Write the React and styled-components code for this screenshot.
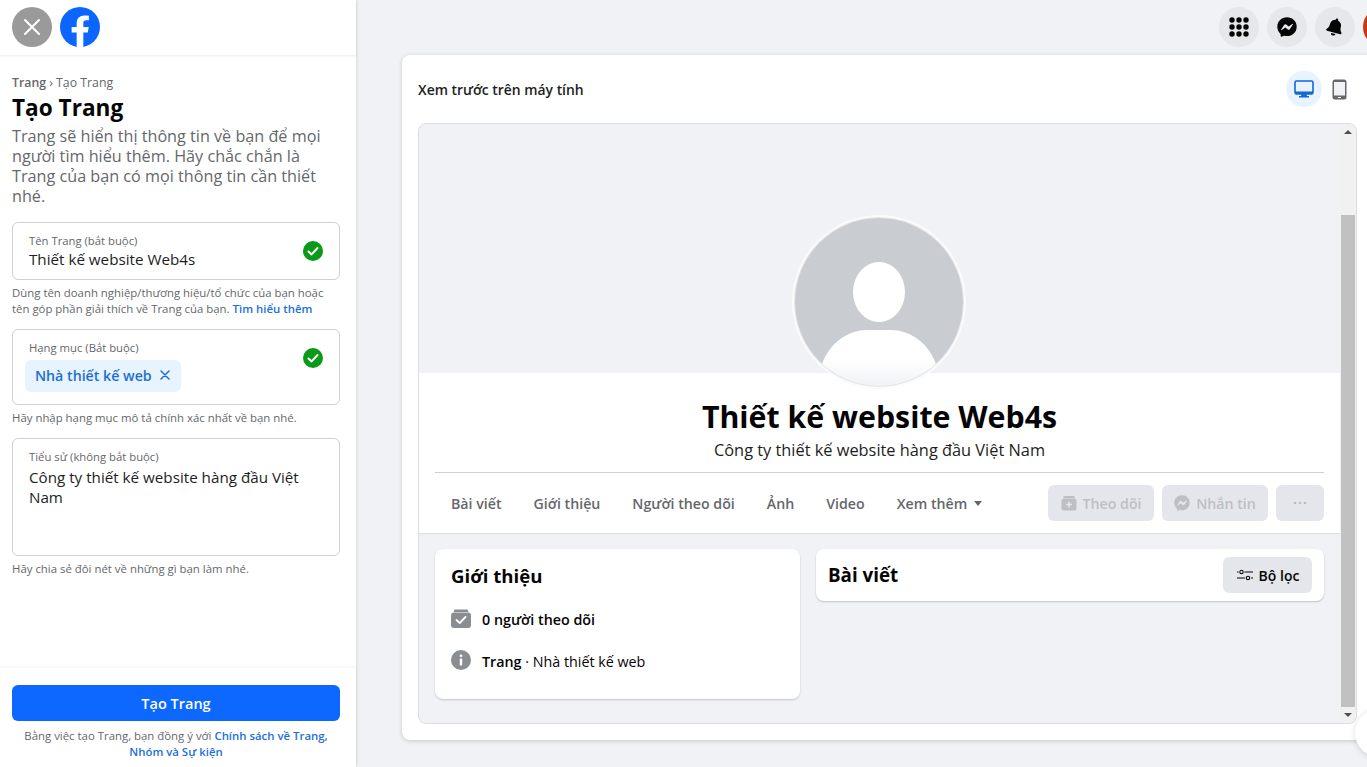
import React from "react";
import styled, { createGlobalStyle } from "styled-components";
import { FaFacebookMessenger, FaBell } from "react-icons/fa";

const FONT = `"Open Sans", "Noto Sans", "Liberation Sans", sans-serif`;

const GlobalStyle = createGlobalStyle`
  html, body {
    margin: 0;
    height: 100%;
    overflow: hidden;
    background: #f0f2f5;
    font-family: ${FONT};
    color: #050505;
  }
  * { box-sizing: border-box; }
`;

const Page = styled.div`
  display: flex;
  width: 100vw;
  height: 100vh;
  position: relative;
  overflow: hidden;
`;

/* ---------- sidebar ---------- */

const Sidebar = styled.aside`
  width: 356px;
  flex-shrink: 0;
  height: 100%;
  display: flex;
  flex-direction: column;
  background: #fff;
  box-shadow: 1px 0 3px rgba(0, 0, 0, 0.1);
  z-index: 2;
`;

const SideHeader = styled.div`
  height: 55px;
  flex-shrink: 0;
  display: flex;
  align-items: flex-start;
  gap: 8px;
  padding: 7px 12px 0;
  box-shadow: 0 1px 2px rgba(0, 0, 0, 0.08);
`;

const CloseButton = styled.button`
  width: 40px;
  height: 40px;
  border: 0;
  padding: 0;
  border-radius: 50%;
  background: #9a9a9a;
  display: flex;
  align-items: center;
  justify-content: center;
`;

const SideBody = styled.div`
  flex: 1;
  padding: 20px 16px 0 12px;
  min-height: 0;
`;

const Crumbs = styled.div`
  font-size: 12.3px;
  line-height: 16px;
  color: #65676b;
  b { font-weight: 600; }
`;

const PageTitle = styled.h1`
  margin: 2px 0 0;
  font-size: 22.6px;
  line-height: 30px;
  font-weight: 700;
  color: #050505;
`;

const Lead = styled.p`
  margin: 3px 0 16px;
  font-size: 16.2px;
  line-height: 20px;
  color: #65676b;
`;

const Field = styled.div`
  position: relative;
  width: 328px;
  height: ${(p) => p.$h}px;
  border: 1px solid #ced0d4;
  border-radius: 6px;
  padding: 11px 16px 0;
  background: #fff;
`;

const FieldLabel = styled.div`
  font-size: 11.3px;
  line-height: 14px;
  color: #65676b;
`;

const FieldValue = styled.div`
  margin-top: ${(p) => p.$top}px;
  font-size: 15.2px;
  line-height: 20px;
  color: #1c1e21;
  width: 285px;
`;

const CheckBadge = styled.span`
  position: absolute;
  right: 16px;
  top: 18px;
  width: 20px;
  height: 20px;
  border-radius: 50%;
  background: #0a9a17;
  display: flex;
  align-items: center;
  justify-content: center;
`;

const Chip = styled.span`
  display: inline-flex;
  align-items: center;
  gap: 8px;
  width: 156px;
  height: 32px;
  margin: 5px 0 0 -4px;
  padding: 0 9px 2px 10px;
  border-radius: 6px;
  background: #e7f3ff;
  color: #1b6fd0;
  font-size: 14.2px;
  font-weight: 600;
  white-space: nowrap;
`;

const Hint = styled.p`
  margin: 5px 0 ${(p) => p.$gap}px;
  font-size: 11.4px;
  line-height: 16px;
  color: #65676b;
  width: 328px;
  a { color: #216fdb; font-weight: 600; text-decoration: none; }
`;

const SideFooter = styled.div`
  flex-shrink: 0;
  height: 99px;
  padding: 17px 16px 0 12px;
  box-shadow: 0 -1px 3px rgba(0, 0, 0, 0.05);
`;

const SubmitButton = styled.button`
  display: block;
  width: 328px;
  height: 36px;
  border: 0;
  border-radius: 6px;
  background: #0c68ff;
  color: #fff;
  font-family: ${FONT};
  font-size: 14.5px;
  font-weight: 600;
`;

const Terms = styled.p`
  margin: 7px 0 0;
  width: 328px;
  text-align: center;
  font-size: 11.4px;
  line-height: 16px;
  color: #65676b;
  a { color: #216fdb; font-weight: 600; text-decoration: none; }
`;

/* ---------- main ---------- */

const Main = styled.main`
  flex: 1;
  min-width: 0;
  display: flex;
  flex-direction: column;
  padding-left: 46px;
`;

const TopBar = styled.div`
  height: 55px;
  flex-shrink: 0;
  display: flex;
  justify-content: flex-end;
  align-items: flex-start;
  gap: 8px;
  padding-top: 7px;
  margin-right: -36px;
`;

const RoundButton = styled.div`
  width: 40px;
  height: 40px;
  flex-shrink: 0;
  border-radius: 50%;
  background: ${(p) => p.$bg || "#e6e7ea"};
  display: flex;
  align-items: center;
  justify-content: center;
  color: #050505;
`;

const TiltedBell = styled(FaBell)`
  transform: rotate(15deg);
`;

const PreviewCard = styled.section`
  height: 685px;
  margin-right: -12px;
  background: #fff;
  border-radius: 8px;
  box-shadow: 0 1px 4px rgba(0, 0, 0, 0.18);
  padding: 16px 22px 16px 16px;
  display: flex;
  flex-direction: column;
`;

const PreviewHead = styled.div`
  height: 36px;
  flex-shrink: 0;
  display: flex;
  align-items: center;
  justify-content: space-between;
  margin-bottom: 16px;
`;

const PreviewLabel = styled.div`
  font-size: 13.9px;
  font-weight: 600;
  color: #1c1e21;
`;

const DeviceGroup = styled.div`
  display: flex;
  align-items: center;
  gap: 0;
`;

const DeviceButton = styled.div`
  width: ${(p) => (p.$active ? 36 : 35)}px;
  height: 36px;
  border-radius: 50%;
  background: ${(p) => (p.$active ? "#e7f3ff" : "transparent")};
  display: flex;
  align-items: center;
  justify-content: center;
`;

const Frame = styled.div`
  flex: 1;
  min-height: 0;
  display: flex;
  background: #f0f2f5;
  border: 1px solid #dadde1;
  border-radius: 8px;
  overflow: hidden;
`;

const FrameContent = styled.div`
  flex: 1;
  min-width: 0;
`;

const Cover = styled.div`
  height: 249px;
  background: #f0f2f5;
`;

const ProfileHead = styled.div`
  position: relative;
  height: 160px;
  background: #fff;
  box-shadow: 0 1px 1px rgba(0, 0, 0, 0.08);
  padding: 24px 16px 0;
  text-align: center;
`;

const Avatar = styled.div`
  position: absolute;
  left: 50%;
  top: -155px;
  width: 168px;
  height: 168px;
  margin-left: -85px;
  border-radius: 50%;
  overflow: hidden;
  box-shadow: 0 0 0 1px rgba(0, 0, 0, 0.08);
  svg { display: block; }
`;

const AvatarRing = styled.div`
  position: absolute;
  left: 50%;
  top: -158px;
  width: 174px;
  height: 174px;
  margin-left: -88px;
  border-radius: 50%;
  background: #fbfbfc;
`;

const ProfileName = styled.h2`
  position: relative;
  margin: 0;
  font-size: 30.3px;
  line-height: 40px;
  font-weight: 700;
  color: #050505;
`;

const ProfileBio = styled.div`
  font-size: 16.35px;
  line-height: 20px;
  margin-top: 3px;
  color: #1c1e21;
`;

const TabRow = styled.div`
  margin-top: 12px;
  height: 61px;
  border-top: 1px solid #ced0d4;
  display: flex;
  align-items: center;
  justify-content: space-between;
`;

const Tabs = styled.div`
  display: flex;
  gap: 32px;
  padding-left: 16px;
`;

const Tab = styled.div`
  display: flex;
  align-items: center;
  gap: 7px;
  font-size: 14.2px;
  font-weight: 600;
  color: #65676b;
`;

const Caret = styled.span`
  width: 0;
  height: 0;
  border-left: 4.5px solid transparent;
  border-right: 4.5px solid transparent;
  border-top: 5px solid #65676b;
`;

const Actions = styled.div`
  display: flex;
  gap: 8px;
`;

const GhostButton = styled.div`
  width: ${(p) => p.$w}px;
  height: 36px;
  border-radius: 6px;
  background: #e4e6eb;
  color: #bcc0c4;
  font-size: 14.2px;
  font-weight: 600;
  display: flex;
  align-items: center;
  justify-content: center;
  gap: 6px;
`;

const Columns = styled.div`
  display: grid;
  grid-template-columns: 365px 508px;
  gap: 16px;
  padding: 16px 16px 0;
  align-items: start;
`;

const Card = styled.div`
  background: #fff;
  border-radius: 8px;
  box-shadow: 0 1px 2px rgba(0, 0, 0, 0.2);
`;

const AboutCard = styled(Card)`
  height: 150px;
  padding: 14px 16px 0;
`;

const CardTitle = styled.h3`
  margin: 0 0 19px;
  font-size: 18.6px;
  line-height: 26px;
  font-weight: 700;
  color: #050505;
`;

const InfoRow = styled.div`
  display: flex;
  align-items: center;
  gap: 11px;
  height: 20px;
  margin-bottom: 22px;
  font-size: 14.3px;
  color: #050505;
  b { font-weight: 600; }
`;

const InfoText = styled.span`
  padding-top: 2px;
`;

const PostsCard = styled(Card)`
  height: 52px;
  display: flex;
  align-items: center;
  justify-content: space-between;
  padding: 0 12px;
`;

const PostsTitle = styled.div`
  font-size: 18.8px;
  font-weight: 700;
`;

const FilterButton = styled.div`
  width: 89px;
  height: 36px;
  border-radius: 6px;
  background: #e4e6eb;
  display: flex;
  align-items: center;
  justify-content: center;
  gap: 5px;
  font-size: 14px;
  font-weight: 600;
  color: #050505;
`;

const Scrollbar = styled.div`
  width: 16px;
  flex-shrink: 0;
  display: flex;
  flex-direction: column;
  align-items: center;
  background: #f1f1f1;
`;

const ScrollArrow = styled.div`
  height: 16px;
  flex-shrink: 0;
  display: flex;
  align-items: center;
  justify-content: center;
  margin-top: ${(p) => (p.$down ? "auto" : "0")};
  &::before {
    content: "";
    border-left: 4px solid transparent;
    border-right: 4px solid transparent;
    ${(p) => (p.$down ? "border-top: 4px solid #505050;" : "border-bottom: 4px solid #505050;")}
  }
`;

const ScrollThumb = styled.div`
  width: 14px;
  height: 492px;
  margin-top: 75px;
  background: #c1c1c1;
`;

const ChatBubble = styled.div`
  position: absolute;
  left: 1355px;
  top: 709px;
  width: 48px;
  height: 48px;
  border-radius: 50%;
  background: #fff;
  box-shadow: 0 1px 6px rgba(0, 0, 0, 0.15);
  z-index: 3;
`;

/* ---------- drawings ---------- */

const FbLogo = () => (
  <svg width="40" height="40" viewBox="0 0 36 36">
    <circle cx="18" cy="18" r="18" fill="#0b66ff" />
    <path
      d="M25 23l.8-5H21v-3.500c0-1.400.5-2.500 2.700-2.500H26V7.900c-1.300-.2-2.700-.3-4-.3-4.100 0-7 2.500-7 7V18h-4.500v5H15v12.700c1 .2 2 .3 3 .3s2-.1 3-.3V23h4z"
      fill="#fff"
    />
  </svg>
);

const CloseIcon = () => (
  <svg width="18" height="18" viewBox="0 0 18 18">
    <path d="M2 2 16 16M16 2 2 16" stroke="#fff" strokeWidth="2" strokeLinecap="round" />
  </svg>
);

const CheckIcon = () => (
  <svg width="12" height="12" viewBox="0 0 12 12">
    <path d="M1.500 6.500 4.600 9.400 10.500 3" fill="none" stroke="#fff" strokeWidth="2" strokeLinecap="round" strokeLinejoin="round" />
  </svg>
);

const ChipClose = () => (
  <svg width="10" height="10" viewBox="0 0 10 10">
    <path d="M1 1 9 9M9 1 1 9" stroke="#1b6fd0" strokeWidth="1.500" strokeLinecap="round" />
  </svg>
);

const MenuDots = () => (
  <svg width="20" height="20" viewBox="0 0 20 20" fill="#050505">
    {[3, 10, 17].flatMap((y) =>
      [3, 10, 17].map((x) => <circle key={`${x}-${y}`} cx={x} cy={y} r="2.700" />)
    )}
  </svg>
);

const MonitorIcon = () => (
  <svg width="20" height="18" viewBox="0 0 20 18">
    <rect x="1" y="1" width="18" height="12" rx="1.500" fill="none" stroke="#1467d6" strokeWidth="1.600" />
    <path d="M0.500 11.500h19v1.600a1.600 1.600 0 0 1-1.600 1.600H2.100a1.600 1.600 0 0 1-1.600-1.600Z" fill="#1467d6" />
    <path d="M7.500 14h5l.5 2h2v1.500H5V16h2Z" fill="#1467d6" />
  </svg>
);

const PhoneIcon = () => (
  <svg width="15" height="21" viewBox="0 0 15 21">
    <rect x="0.500" y="0.500" width="14" height="20" rx="2.500" fill="#65676b" />
    <rect x="2" y="3" width="11" height="13.500" fill="#f0f2f5" />
    <rect x="6" y="18" width="3" height="1" fill="#fff" />
  </svg>
);

const AvatarArt = () => (
  <svg width="168" height="168" viewBox="0 0 168 168">
    <defs>
      <linearGradient id="shoulder" x1="0" y1="0" x2="0" y2="1">
        <stop offset="0.5" stopColor="#fff" />
        <stop offset="1" stopColor="#f0f2f5" />
      </linearGradient>
    </defs>
    <rect width="168" height="168" fill="#c9ccd1" />
    <ellipse cx="84" cy="74" rx="26" ry="30" fill="#fff" />
    <path d="M27 146C35 124 54 112 72 112H96C114 112 133 124 141 146V168H27Z" fill="url(#shoulder)" />
  </svg>
);

const FollowPlus = () => (
  <svg width="16" height="16" viewBox="0 0 16 16">
    <path d="M3 1h10l1 2H2Z" fill="#bcc0c4" />
    <rect x="0.500" y="3.500" width="15" height="12" rx="2" fill="#bcc0c4" />
    <path d="M8 6.500v6M5 9.500h6" stroke="#e4e6eb" strokeWidth="1.500" />
  </svg>
);

const FollowCheck = () => (
  <svg width="20" height="20" viewBox="0 0 20 20">
    <path d="M3.500 1.500h13l1 2.500h-15Z" fill="#8a8d91" />
    <rect y="4.500" width="20" height="15.500" rx="3" fill="#8a8d91" />
    <path d="M5.500 12 8.700 15 14.500 9" fill="none" stroke="#fff" strokeWidth="1.800" strokeLinecap="round" strokeLinejoin="round" />
  </svg>
);

const InfoIcon = () => (
  <svg width="20" height="20" viewBox="0 0 20 20">
    <circle cx="10" cy="10" r="10" fill="#8a8d91" />
    <circle cx="10" cy="5.800" r="1.400" fill="#fff" />
    <rect x="8.800" y="8.500" width="2.400" height="7" rx="0.800" fill="#fff" />
  </svg>
);

const FilterIcon = () => (
  <svg width="18" height="14" viewBox="0 0 18 14" fill="none" stroke="#050505" strokeWidth="1.100">
    <path d="M1 4h1.500M8.500 4H17M1 10h8M15 10h2" />
    <circle cx="5.500" cy="4" r="1.700" />
    <circle cx="12" cy="10" r="1.700" />
  </svg>
);

const GhostDots = () => (
  <svg width="14" height="4" viewBox="0 0 14 4" fill="#bcc0c4">
    <circle cx="2" cy="2" r="1.300" />
    <circle cx="7" cy="2" r="1.300" />
    <circle cx="12" cy="2" r="1.300" />
  </svg>
);

const TABS = ["Bài viết", "Giới thiệu", "Người theo dõi", "Ảnh", "Video"];

const App = () => (
  <Page>
    <GlobalStyle />

    <Sidebar>
      <SideHeader>
        <CloseButton aria-label="Đóng">
          <CloseIcon />
        </CloseButton>
        <FbLogo />
      </SideHeader>

      <SideBody>
        <Crumbs>
          <b>Trang</b> › Tạo Trang
        </Crumbs>
        <PageTitle>Tạo Trang</PageTitle>
        <Lead>
          Trang sẽ hiển thị thông tin về bạn để mọi người tìm hiểu thêm. Hãy chắc chắn là
          Trang của bạn có mọi thông tin cần thiết nhé.
        </Lead>

        <Field $h={58}>
          <FieldLabel>Tên Trang (bắt buộc)</FieldLabel>
          <FieldValue $top={1}>Thiết kế website Web4s</FieldValue>
          <CheckBadge>
            <CheckIcon />
          </CheckBadge>
        </Field>
        <Hint $gap={12}>
          Dùng tên doanh nghiệp/thương hiệu/tổ chức của bạn hoặc tên góp phần giải thích về
          Trang của bạn. <a href="#more">Tìm hiểu thêm</a>
        </Hint>

        <Field $h={76}>
          <FieldLabel>Hạng mục (Bắt buộc)</FieldLabel>
          <Chip>
            Nhà thiết kế web <ChipClose />
          </Chip>
          <CheckBadge>
            <CheckIcon />
          </CheckBadge>
        </Field>
        <Hint $gap={12}>Hãy nhập hạng mục mô tả chính xác nhất về bạn nhé.</Hint>

        <Field $h={118}>
          <FieldLabel>Tiểu sử (không bắt buộc)</FieldLabel>
          <FieldValue $top={3}>Công ty thiết kế website hàng đầu Việt Nam</FieldValue>
        </Field>
        <Hint $gap={0}>Hãy chia sẻ đôi nét về những gì bạn làm nhé.</Hint>
      </SideBody>

      <SideFooter>
        <SubmitButton>Tạo Trang</SubmitButton>
        <Terms>
          Bằng việc tạo Trang, bạn đồng ý với <a href="#terms">Chính sách về Trang, Nhóm và Sự kiện</a>
        </Terms>
      </SideFooter>
    </Sidebar>

    <Main>
      <TopBar>
        <RoundButton>
          <MenuDots />
        </RoundButton>
        <RoundButton>
          <FaFacebookMessenger size={20} />
        </RoundButton>
        <RoundButton>
          <TiltedBell size={18} />
        </RoundButton>
        <RoundButton $bg="#c8390f" />
      </TopBar>

      <PreviewCard>
        <PreviewHead>
          <PreviewLabel>Xem trước trên máy tính</PreviewLabel>
          <DeviceGroup>
            <DeviceButton $active>
              <MonitorIcon />
            </DeviceButton>
            <DeviceButton>
              <PhoneIcon />
            </DeviceButton>
          </DeviceGroup>
        </PreviewHead>

        <Frame>
          <FrameContent>
            <Cover />
            <ProfileHead>
              <AvatarRing />
              <Avatar>
                <AvatarArt />
              </Avatar>
              <ProfileName>Thiết kế website Web4s</ProfileName>
              <ProfileBio>Công ty thiết kế website hàng đầu Việt Nam</ProfileBio>
              <TabRow>
                <Tabs>
                  {TABS.map((t) => (
                    <Tab key={t}>{t}</Tab>
                  ))}
                  <Tab>
                    Xem thêm <Caret />
                  </Tab>
                </Tabs>
                <Actions>
                  <GhostButton $w={106}>
                    <FollowPlus />
                    Theo dõi
                  </GhostButton>
                  <GhostButton $w={106}>
                    <FaFacebookMessenger size={16} />
                    Nhắn tin
                  </GhostButton>
                  <GhostButton $w={48}>
                    <GhostDots />
                  </GhostButton>
                </Actions>
              </TabRow>
            </ProfileHead>

            <Columns>
              <AboutCard>
                <CardTitle>Giới thiệu</CardTitle>
                <InfoRow>
                  <FollowCheck />
                  <InfoText>
                    <b>0 người theo dõi</b>
                  </InfoText>
                </InfoRow>
                <InfoRow>
                  <InfoIcon />
                  <InfoText>
                    <b>Trang</b> · Nhà thiết kế web
                  </InfoText>
                </InfoRow>
              </AboutCard>
              <PostsCard>
                <PostsTitle>Bài viết</PostsTitle>
                <FilterButton>
                  <FilterIcon />
                  Bộ lọc
                </FilterButton>
              </PostsCard>
            </Columns>
          </FrameContent>

          <Scrollbar>
            <ScrollArrow />
            <ScrollThumb />
            <ScrollArrow $down />
          </Scrollbar>
        </Frame>
      </PreviewCard>
    </Main>

    <ChatBubble />
  </Page>
);

export default App;
